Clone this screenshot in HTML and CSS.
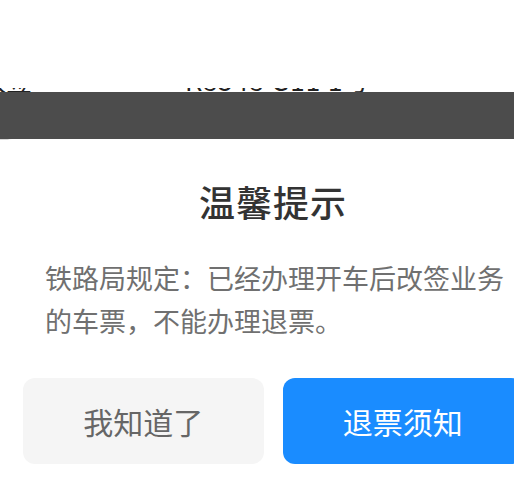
FILE: index.html
```html
<!DOCTYPE html>
<html lang="zh-CN">
<head>
<meta charset="utf-8">
<title>温馨提示</title>
<link rel="stylesheet" href="styles.css">
</head>
<body>
<div class="page">
  <div class="top">
    <div class="cut">
      <span class="cut-left">改签</span>
      <span class="cut-mid">K8548 G11 1号</span>
    </div>
  </div>
  <div class="overlay"></div>
  <div class="sheet">
    <h1 class="title">温馨提示</h1>
    <p class="msg">铁路局规定：已经办理开车后改签业务的车票，不能办理退票。</p>
    <div class="actions">
      <button class="btn btn-gray">我知道了</button>
      <button class="btn btn-blue">退票须知</button>
    </div>
  </div>
</div>
</body>
</html>
```
FILE: styles.css
```css
html, body {
  margin: 0;
  padding: 0;
  background: #ffffff;
}
body {
  width: 514px;
  height: 500px;
  overflow: hidden;
  font-family: "Noto Sans CJK SC", "Noto Sans", sans-serif;
}
.page {
  width: 546px;
}
.top {
  height: 92px;
  display: flex;
  flex-direction: column;
  justify-content: flex-end;
}
.cut {
  height: 4px;
  overflow: hidden;
  display: flex;
  align-items: flex-end;
  color: #222;
  font-size: 26px;
  line-height: 26px;
}
.cut span {
  display: block;
  height: 26px;
  margin-bottom: -1px;
}
.cut-left {
  margin-left: -20px;
  width: 205px;
}
.cut-mid {
  letter-spacing: 1px;
}
.overlay {
  height: 48px;
  background: #4c4c4c;
  border-bottom: 1px solid #d8d8d8;
  box-sizing: border-box;
}
.sheet {
  background: #ffffff;
  border-top-left-radius: 12px;
  margin-top: -1px;
  padding: 37px 23px 36px 23px;
}
.title {
  margin: 0;
  text-align: center;
  font-size: 36px;
  line-height: 50px;
  font-weight: 500;
  color: #333333;
  letter-spacing: 1px;
}
.msg {
  margin: 30px 17px 0 22px;
  font-size: 27px;
  line-height: 43px;
  color: #707070;
}
.actions {
  margin-top: 36px;
  display: flex;
  gap: 19px;
}
.btn {
  flex: 1;
  height: 86px;
  border: none;
  border-radius: 12px;
  font-family: inherit;
  font-size: 30px;
  padding: 0;
}
.btn-gray {
  background: #f5f5f5;
  color: #666666;
}
.btn-blue {
  background: #1a8cff;
  color: #ffffff;
}
```
